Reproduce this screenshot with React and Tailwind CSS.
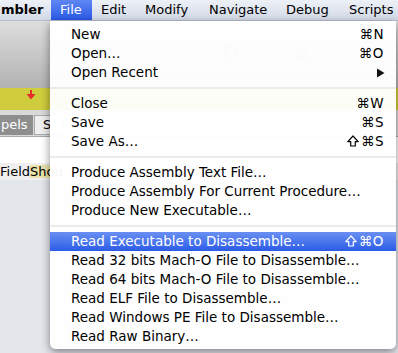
import React from "react";

const font = { fontFamily: '"DejaVu Sans", "Liberation Sans", sans-serif' };

function Shift() {
  return (
    <svg width="12" height="12" viewBox="0 0 12 12" className="mr-[2px] mt-[-1px]">
      <path
        d="M6 1 L11.2 6.6 L8.3 6.6 L8.3 11 L3.7 11 L3.7 6.6 L0.8 6.6 Z"
        fill="none"
        stroke="currentColor"
        strokeWidth="1.2"
        strokeLinejoin="round"
      />
    </svg>
  );
}

function Sep() {
  return (
    <div className="h-[12px] flex items-center">
      <div className="h-[2px] w-full bg-[#ebebeb]" />
    </div>
  );
}

function Item({ label, sc, shift, arrow, active }) {
  return (
    <div
      className={
        "h-[19px] flex items-center justify-between pl-[21px] pr-[12px] text-[13.5px] leading-none " +
        (active
          ? "bg-gradient-to-b from-[#6a8ff3] to-[#2c5be6] text-white"
          : "text-black")
      }
    >
      <span>{label}</span>
      {sc && (
        <span className="flex items-center tracking-[0.5px]">
          {shift && <Shift />}
          {sc}
        </span>
      )}
      {arrow && (
        <svg width="9" height="10" viewBox="0 0 9 10" className="mr-[-1px]">
          <polygon points="1,0.5 8.5,5 1,9.5" fill="#111" />
        </svg>
      )}
    </div>
  );
}

export default function App() {
  return (
    <div className="relative w-[398px] h-[353px] overflow-hidden bg-[#e3e6eb]" style={font}>
      {/* menu bar */}
      <div className="h-[21px] flex items-center bg-gradient-to-b from-[#edf1f7] to-[#d3dae7] border-b border-[#b9c0cc] text-[13px] text-black">
        <div className="w-[51px] pl-[1px] font-bold">mbler</div>
        <div className="w-[41px] h-full flex items-center pl-[9px] bg-gradient-to-b from-[#5f86f2] to-[#2a58e6] text-white">File</div>
        <div className="w-[44px] pl-[9px]">Edit</div>
        <div className="w-[64px] pl-[9px]">Modify</div>
        <div className="w-[77px] pl-[9px]">Navigate</div>
        <div className="w-[63px] pl-[9px]">Debug</div>
        <div className="flex-1 pl-[9px] whitespace-nowrap">Scripts</div>
      </div>

      {/* background window content */}
      <div className="h-[67px] bg-gradient-to-b from-[#dedede] to-[#b2b2b2] flex items-center text-[22px] text-[#999]">
        <span className="ml-[222px]">D</span>
        <span className="ml-[56px]">A</span>
      </div>
      <div className="h-[22px] bg-[#cfcd3d] flex items-center">
        <svg width="10" height="10" viewBox="0 0 10 10" className="ml-[26px] mt-[-8px]">
          <rect x="4" y="0" width="2" height="5" fill="#e52b2b" />
          <polygon points="0.5,4 9.5,4 5,9.5" fill="#e52b2b" />
        </svg>
      </div>
      <div className="h-[27px] bg-[#d9d9d9] flex items-end pb-[1px] text-[13px] border-b border-[#aaa]">
        <div className="w-[33px] h-[20px] bg-[#8e8e8e] text-white flex items-center pl-[1px]">pels</div>
        <div className="w-[30px] h-[20px] ml-[1px] bg-[#efefef] border border-[#aaa] flex items-center pl-[8px]">S</div>
      </div>
      <div className="h-[26px] bg-white" />
      <div className="h-[17px] bg-[#efefef] text-[13px] flex items-center leading-none">
        <span>Field</span>
        <span className="bg-[#ebe3ab]">Shou</span>
      </div>

      {/* dropdown menu */}
      <div className="absolute top-[21px] left-[50px] w-[346px] pt-[4px] pb-[3px] bg-white/[0.96] rounded-b-[6px] shadow-[0_3px_10px_rgba(0,0,0,0.45)]">
        <Item label="New" sc="⌘N" />
        <Item label="Open…" sc="⌘O" />
        <Item label="Open Recent" arrow />
        <Sep />
        <Item label="Close" sc="⌘W" />
        <Item label="Save" sc="⌘S" />
        <Item label="Save As…" sc="⌘S" shift />
        <Sep />
        <Item label="Produce Assembly Text File…" />
        <Item label="Produce Assembly For Current Procedure…" />
        <Item label="Produce New Executable…" />
        <Sep />
        <Item label="Read Executable to Disassemble…" sc="⌘O" shift active />
        <Item label="Read 32 bits Mach-O File to Disassemble…" />
        <Item label="Read 64 bits Mach-O File to Disassemble…" />
        <Item label="Read ELF File to Disassemble…" />
        <Item label="Read Windows PE File to Disassemble…" />
        <Item label="Read Raw Binary…" />
      </div>
    </div>
  );
}
